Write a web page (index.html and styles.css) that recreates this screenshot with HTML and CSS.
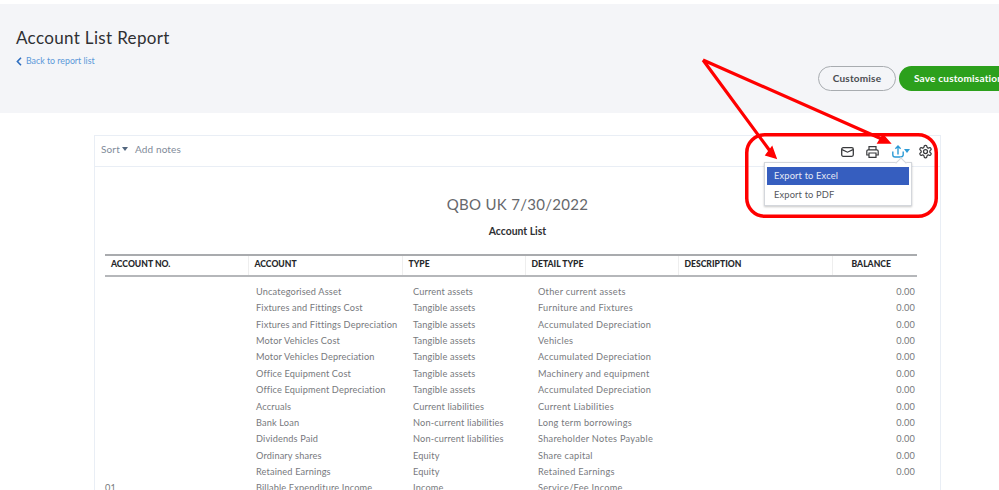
FILE: index.html
```html
<!DOCTYPE html>
<html lang="en">
<head>
<meta charset="utf-8">
<title>Account List Report</title>
<link rel="stylesheet" href="styles.css">
</head>
<body>
<div class="page">
  <header class="band">
    <div class="band-left">
      <h1 class="title">Account List Report</h1>
      <a class="back"><svg class="chev" width="6" height="9" viewBox="0 0 6 9"><path d="M5 .8 1.400 4.500 5 8.200" fill="none" stroke="#2f6fc0" stroke-width="1.600"/></svg>Back to report list</a>
    </div>
    <div class="band-actions">
      <button class="btn btn-ghost">Customise</button>
      <button class="btn btn-green">Save customisation</button>
    </div>
  </header>
  <main class="card">
    <div class="toolbar">
      <div class="tools-left">
        <span class="tool">Sort<i class="caret"></i></span>
        <span class="tool">Add notes</span>
      </div>
      <div class="tools-right">
        <svg class="ico" width="13" height="10" viewBox="0 0 13 10"><rect x=".7" y=".7" width="11.600" height="8.600" rx="1.500" fill="none" stroke="#393a3d" stroke-width="1.300"/><path d="M1 2.600 6.500 5.200 12 2.600" fill="none" stroke="#393a3d" stroke-width="1.200"/></svg>
        <svg class="ico" width="13" height="12" viewBox="0 0 13 12"><path d="M3 3.800V.7h7v3.100M3 9H.8V5.200a1.400 1.400 0 0 1 1.400-1.400h8.600a1.400 1.400 0 0 1 1.400 1.400V9H10M3 7h7v4.300H3z" fill="none" stroke="#393a3d" stroke-width="1.200"/></svg>
        <span class="export">
          <svg width="12" height="13" viewBox="0 0 12 13"><path d="M.8 6.500v3.200A2.300 2.300 0 0 0 3.100 12h5.800a2.300 2.300 0 0 0 2.300-2.300V6.500M6 9.500V1.200M3.400 3.700 6 1.100l2.600 2.600" fill="none" stroke="#2d9bd6" stroke-width="1.400"/></svg>
          <i class="caret caret-blue"></i>
        </span>
        <svg class="ico" width="15" height="15" viewBox="0 0 24 24"><path d="M12.220 2h-.44a2 2 0 0 0-2 2v.18a2 2 0 0 1-1 1.730l-.43.25a2 2 0 0 1-2 0l-.15-.08a2 2 0 0 0-2.730.73l-.22.38a2 2 0 0 0 .73 2.730l.15.1a2 2 0 0 1 1 1.720v.51a2 2 0 0 1-1 1.740l-.15.09a2 2 0 0 0-.73 2.730l.22.38a2 2 0 0 0 2.730.73l.15-.08a2 2 0 0 1 2 0l.43.25a2 2 0 0 1 1 1.730V20a2 2 0 0 0 2 2h.44a2 2 0 0 0 2-2v-.18a2 2 0 0 1 1-1.730l.43-.25a2 2 0 0 1 2 0l.15.08a2 2 0 0 0 2.730-.73l.22-.39a2 2 0 0 0-.73-2.730l-.15-.08a2 2 0 0 1-1-1.740v-.5a2 2 0 0 1 1-1.740l.15-.09a2 2 0 0 0 .73-2.730l-.22-.38a2 2 0 0 0-2.730-.73l-.15.08a2 2 0 0 1-2 0l-.43-.25a2 2 0 0 1-1-1.730V4a2 2 0 0 0-2-2z" fill="none" stroke="#393a3d" stroke-width="2"/><circle cx="12" cy="12" r="3.200" fill="none" stroke="#393a3d" stroke-width="2"/></svg>
      </div>
    </div>
    <div class="menu">
      <div class="menu-item active">Export to Excel</div>
      <div class="menu-item">Export to PDF</div>
    </div>
    <div class="report-head">
      <div class="company">QBO UK 7/30/2022</div>
      <div class="subtitle">Account List</div>
    </div>
    <table class="report">
      <thead>
        <tr><th class="c1">ACCOUNT NO.</th><th class="c2">ACCOUNT</th><th class="c3">TYPE</th><th class="c4">DETAIL TYPE</th><th class="c5">DESCRIPTION</th><th class="c6">BALANCE</th></tr>
      </thead>
      <tbody>
        <tr class="first"><td></td><td>Uncategorised Asset</td><td class="t3">Current assets</td><td class="t4">Other current assets</td><td></td><td>0.00</td></tr>
        <tr><td></td><td>Fixtures and Fittings Cost</td><td class="t3">Tangible assets</td><td class="t4">Furniture and Fixtures</td><td></td><td>0.00</td></tr>
        <tr><td></td><td>Fixtures and Fittings Depreciation</td><td class="t3">Tangible assets</td><td class="t4">Accumulated Depreciation</td><td></td><td>0.00</td></tr>
        <tr><td></td><td>Motor Vehicles Cost</td><td class="t3">Tangible assets</td><td class="t4">Vehicles</td><td></td><td>0.00</td></tr>
        <tr><td></td><td>Motor Vehicles Depreciation</td><td class="t3">Tangible assets</td><td class="t4">Accumulated Depreciation</td><td></td><td>0.00</td></tr>
        <tr><td></td><td>Office Equipment Cost</td><td class="t3">Tangible assets</td><td class="t4">Machinery and equipment</td><td></td><td>0.00</td></tr>
        <tr><td></td><td>Office Equipment Depreciation</td><td class="t3">Tangible assets</td><td class="t4">Accumulated Depreciation</td><td></td><td>0.00</td></tr>
        <tr><td></td><td>Accruals</td><td class="t3">Current liabilities</td><td class="t4">Current Liabilities</td><td></td><td>0.00</td></tr>
        <tr><td></td><td>Bank Loan</td><td class="t3">Non-current liabilities</td><td class="t4">Long term borrowings</td><td></td><td>0.00</td></tr>
        <tr><td></td><td>Dividends Paid</td><td class="t3">Non-current liabilities</td><td class="t4">Shareholder Notes Payable</td><td></td><td>0.00</td></tr>
        <tr><td></td><td>Ordinary shares</td><td class="t3">Equity</td><td class="t4">Share capital</td><td></td><td>0.00</td></tr>
        <tr><td></td><td>Retained Earnings</td><td class="t3">Equity</td><td class="t4">Retained Earnings</td><td></td><td>0.00</td></tr>
        <tr><td class="num">01</td><td>Billable Expenditure Income</td><td class="t3">Income</td><td class="t4">Service/Fee Income</td><td></td><td></td></tr>
      </tbody>
    </table>
  </main>
  <svg class="annot" width="999" height="490" viewBox="0 0 999 490">
    <rect x="746.750" y="134.750" width="189.500" height="81.500" rx="18" fill="none" stroke="#f00" stroke-width="3.500"/>
    <path d="M703 60 770 151M703 60 884 140" fill="none" stroke="#f00" stroke-width="3.200"/>
    <path d="M776 158 766 155 772 147z M890 143 878 143 883 135z" fill="#f00" stroke="#f00" stroke-width="1.500"/>
  </svg>
</div>
</body>
</html>
```

FILE: styles.css
```css
* { box-sizing: border-box; }
html, body { margin: 0; padding: 0; background: #fff; }
body { font-family: "Lato", "Liberation Sans", sans-serif; color: #393a3d; }
.page { position: relative; width: 999px; height: 490px; overflow: hidden; padding-top: 4px; }

.band { height: 109px; background: #f4f5f8; display: flex; justify-content: space-between; padding: 23px 0 0 16px; }
.title { margin: 0; font-size: 17px; line-height: 22px; font-weight: 400; letter-spacing: .34px; color: #2f3033; }
.back { display: flex; align-items: center; gap: 4px; margin-top: 6px; font-size: 8.800px; line-height: 12px; color: #5b98d8; }
.chev { display: block; }
.band-actions { display: flex; gap: 3px; align-items: flex-start; margin-top: 39px; margin-right: -44px; }
.btn { height: 25px; border-radius: 13px; font: 700 10px/1 "Lato", sans-serif; letter-spacing: .2px; padding: 0 0 1px; }
.btn-ghost { width: 78px; background: transparent; border: 1px solid #a8acb0; color: #4a4c50; }
.btn-green { width: 144px; background: #2ca01c; border: 0; color: #fff; text-align: left; padding-left: 15px; }

.card { margin: 22px 0 0 94px; width: 847px; height: 400px; border: 1px solid #e9eef5; border-bottom: 0; position: relative; }
.toolbar { height: 31px; border-bottom: 1px solid #e9eef5; display: flex; justify-content: space-between; align-items: center; padding: 0 8px 5px 6px; }
.tools-left { display: flex; gap: 7px; }
.tool { font-size: 10px; color: #7f8b99; letter-spacing: .15px; display: inline-flex; align-items: center; }
.caret { display: inline-block; width: 0; height: 0; margin: 1px 0 0 2px; border: 3.500px solid transparent; border-top: 4px solid #53677f; border-bottom: 0; }
.tools-right { display: flex; align-items: center; position: absolute; right: 7px; top: 8px; gap: 12px; }
.ico { display: block; }
.export { display: inline-flex; align-items: center; margin-right: -4px; margin-left: 1px; }
.caret-blue { border-top-color: #2d9bd6; margin: -2px 0 0 0; }

.menu { position: absolute; left: 669px; top: 26px; width: 148px; height: 44px; background: #fff; border: 1px solid #d4d7dc; box-shadow: 0 1px 2px rgba(0,0,0,.22); padding: 4px 2px; z-index: 2; }
.menu::before { content: ""; position: absolute; right: 6px; top: -4px; width: 7px; height: 7px; background: #fff; border-left: 1px solid #d4d7dc; border-top: 1px solid #d4d7dc; transform: rotate(45deg); }
.menu-item { height: 19px; font-size: 9.300px; line-height: 19px; padding-left: 7px; color: #55585d; letter-spacing: .15px; position: relative; }
.menu-item.active { height: 18px; line-height: 18px; background: #365ebf; color: #e6eaf5; }

.report-head { text-align: center; padding-top: 26px; height: 87px; }
.company { font-size: 15px; line-height: 22px; color: #66686c; letter-spacing: .3px; }
.subtitle { font-size: 10.400px; font-weight: 700; line-height: 12px; margin-top: 10px; color: #2f3033; }

.report { margin-left: 10px; width: 812px; table-layout: fixed; border-collapse: collapse; }
.report th { height: 21px; padding: 0 0 3px 6px; font-size: 8.600px; font-weight: 900; text-align: left; color: #26272a; border-top: 2px solid #a9abae; border-bottom: 2px solid #b5b7ba; border-left: 1px solid #eeeeee; }
.report th:first-child { border-left: 0; }
.report .c1 { width: 143px; }
.report .c2 { width: 154px; }
.report .c3 { width: 123px; }
.report .c4 { width: 153px; }
.report .c5 { width: 154px; }
.report .c6 { width: 85px; padding-left: 19px; }
.report td { height: 16.400px; padding: 0 0 0 8px; font-size: 9.200px; line-height: 16px; color: #77797d; white-space: nowrap; letter-spacing: .15px; overflow: visible; }
.report td:first-child { padding-left: 0; }
.report td.t3 { padding-left: 11px; }
.report td.t4 { padding-left: 13px; letter-spacing: .27px; }
.report td:last-child { text-align: right; padding: 0 2px 0 0; }
.report tr.first td { padding-top: 7px; height: 23.400px; }
.report tr.first td:last-child { padding-top: 7px; }

.annot { position: absolute; left: 0; top: 0; pointer-events: none; z-index: 5; }
```
